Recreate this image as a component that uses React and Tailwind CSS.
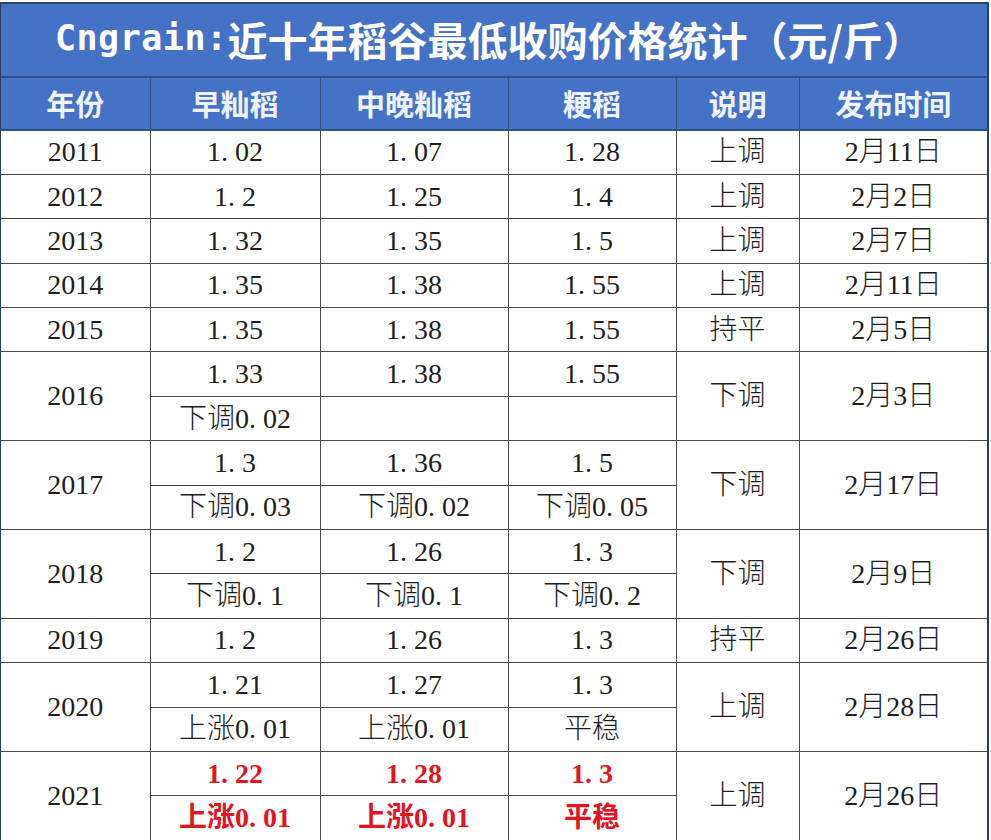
import React from 'react';

const rows = [
  { year: '2011', v: [['1.02'], ['1.07'], ['1.28']], note: '上调', date: '2月11日' },
  { year: '2012', v: [['1.2'], ['1.25'], ['1.4']], note: '上调', date: '2月2日' },
  { year: '2013', v: [['1.32'], ['1.35'], ['1.5']], note: '上调', date: '2月7日' },
  { year: '2014', v: [['1.35'], ['1.38'], ['1.55']], note: '上调', date: '2月11日' },
  { year: '2015', v: [['1.35'], ['1.38'], ['1.55']], note: '持平', date: '2月5日' },
  { year: '2016', v: [['1.33', '下调0.02'], ['1.38', ''], ['1.55', '']], note: '下调', date: '2月3日' },
  { year: '2017', v: [['1.3', '下调0.03'], ['1.36', '下调0.02'], ['1.5', '下调0.05']], note: '下调', date: '2月17日' },
  { year: '2018', v: [['1.2', '下调0.1'], ['1.26', '下调0.1'], ['1.3', '下调0.2']], note: '下调', date: '2月9日' },
  { year: '2019', v: [['1.2'], ['1.26'], ['1.3']], note: '持平', date: '2月26日' },
  { year: '2020', v: [['1.21', '上涨0.01'], ['1.27', '上涨0.01'], ['1.3', '平稳']], note: '上调', date: '2月28日' },
  { year: '2021', v: [['1.22', '上涨0.01'], ['1.28', '上涨0.01'], ['1.3', '平稳']], note: '上调', date: '2月26日', red: true },
];

const headers = ['年份', '早籼稻', '中晚籼稻', '粳稻', '说明', '发布时间'];

// SimSun-like number: the period takes a half-width cell
const Num = ({ text }) => {
  if (!text.includes('.')) return text;
  const i = text.indexOf('.');
  return (
    <>
      {text.slice(0, i)}
      <span className="mr-[0.25em]">.</span>
      {text.slice(i + 1)}
    </>
  );
};

const cell = 'border-[1.5px] border-[#4a4a4a] text-center align-middle p-0';

const App = () => {
  return (
    <div className="w-[991px] h-[840px] overflow-hidden bg-white pt-[2px]">
      <div className="w-[989px] border-t-2 border-l border-r-2 border-[#2b3f66]">
        {/* Title */}
        <div className="h-[74px] bg-[#4472c4] border-b-2 border-[#2f528f] flex items-center justify-center text-white font-bold text-[40px] font-['Noto_Sans_CJK_SC',sans-serif] pr-[10px] pb-[3px]">
          <span className="font-['DejaVu_Sans_Mono',monospace] text-[35px] tracking-[0.5px]">Cngrain:</span>
          <span>近十年稻谷最低收购价格统计（元/斤）</span>
        </div>

        <table className="w-full table-fixed border-collapse text-[28px] text-[#1e1e1e] font-light font-['Liberation_Serif','Noto_Sans_CJK_SC',serif]">
          <colgroup>
            <col className="w-[149px]" />
            <col className="w-[170px]" />
            <col className="w-[188px]" />
            <col className="w-[168px]" />
            <col className="w-[123px]" />
            <col />
          </colgroup>
          <thead>
            <tr className="h-[52px] bg-[#4472c4]">
              {headers.map((h) => (
                <th
                  key={h}
                  className="border-x-[1.5px] border-b-2 border-[#2f4f86] first:border-l-0 last:border-r-0 text-center font-bold text-[29px] text-[#eef2fa] font-['Noto_Sans_CJK_SC',sans-serif] p-0"
                >
                  {h}
                </th>
              ))}
            </tr>
          </thead>
          <tbody>
            {rows.map((r) => {
              const double = r.v[0].length === 2;
              const red = r.red ? 'text-[#e3141e] font-bold' : '';
              if (!double) {
                return (
                  <tr key={r.year} className="h-[44.4px]">
                    <td className={`${cell} border-l-0`}>{r.year}</td>
                    {r.v.map((c, i) => (
                      <td key={i} className={cell}>
                        <Num text={c[0]} />
                      </td>
                    ))}
                    <td className={cell}>{r.note}</td>
                    <td className={`${cell} border-r-0`}>{r.date}</td>
                  </tr>
                );
              }
              return (
                <React.Fragment key={r.year}>
                  <tr className="h-[44.4px]">
                    <td rowSpan={2} className={`${cell} border-l-0`}>{r.year}</td>
                    {r.v.map((c, i) => (
                      <td key={i} className={`${cell} ${red}`}>
                        <Num text={c[0]} />
                      </td>
                    ))}
                    <td rowSpan={2} className={cell}>{r.note}</td>
                    <td rowSpan={2} className={`${cell} border-r-0`}>{r.date}</td>
                  </tr>
                  <tr className="h-[44.4px]">
                    {r.v.map((c, i) => (
                      <td key={i} className={`${cell} ${red}`}>
                        <Num text={c[1]} />
                      </td>
                    ))}
                  </tr>
                </React.Fragment>
              );
            })}
          </tbody>
        </table>
      </div>
    </div>
  );
};

export default App;
